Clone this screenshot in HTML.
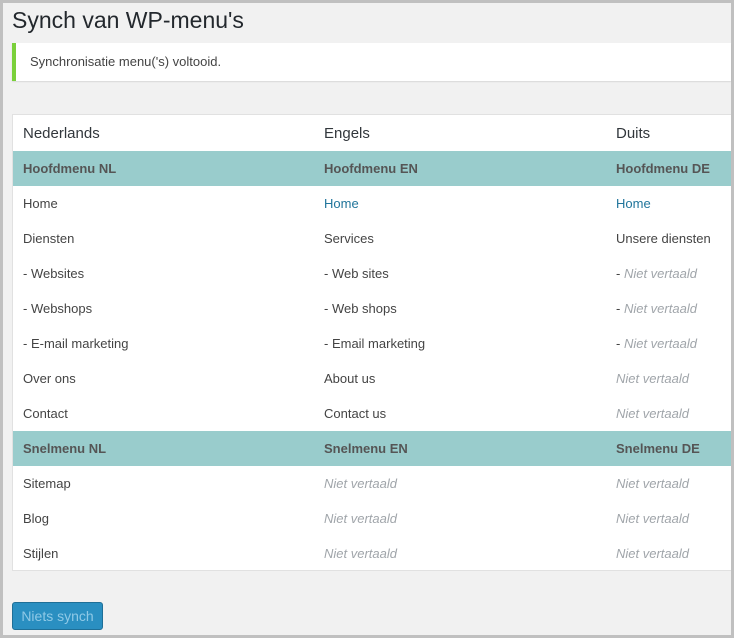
<!DOCTYPE html>
<html><head><style>
html,body{margin:0;padding:0}
body{width:734px;height:638px;background:#f1f1f1;font-family:"Liberation Sans",sans-serif;position:relative;overflow:hidden}
.frame{position:absolute;inset:0;border:3px solid #c0c0c0;box-sizing:border-box}
h1{position:absolute;left:12px;top:7px;margin:0;font-weight:400;font-size:23px;color:#23282d}
.notice{position:absolute;left:12px;top:43px;width:719px;height:38px;background:#fff;border-left:4px solid #7ad03a;box-sizing:border-box;box-shadow:0 1px 1px rgba(0,0,0,.1);font-size:13px;color:#444;line-height:38px;padding-left:14px}
.tbl{position:absolute;left:12px;top:114px;width:719px;height:457px;background:#fff;border:1px solid #e1e1e1;border-right:none;box-sizing:border-box}
.row{position:absolute;left:0;width:718px;height:35px;font-size:13px;line-height:35px;color:#444}
.row span{position:absolute;top:0}
.c1{left:10px}.c2{left:311px}.c3{left:603px}
.hd{font-size:15px;color:#32373c;border-bottom:1px solid #e1e1e1;height:36px;line-height:37px}
.g{background:#99cccc;font-weight:bold;color:#555}
.a{color:#21759b}
.n{color:#a0a5aa;font-style:italic}
.btn{position:absolute;left:12px;top:602px;width:91px;height:28px;box-sizing:border-box;background:#2a8fc1;border:1px solid #1f6f97;border-radius:3px;color:#8fc9e6;font-size:14px;line-height:26px;text-align:center}
</style></head><body>
<div class="frame"></div>
<h1>Synch van WP-menu's</h1>
<div class="notice">Synchronisatie menu('s) voltooid.</div>
<div class="tbl">
<div class="row hd" style="top:0"><span class="c1">Nederlands</span><span class="c2">Engels</span><span class="c3">Duits</span></div>
<div class="row g" style="top:36px"><span class="c1">Hoofdmenu NL</span><span class="c2">Hoofdmenu EN</span><span class="c3">Hoofdmenu DE</span></div>
<div class="row" style="top:71px"><span class="c1">Home</span><span class="c2 a">Home</span><span class="c3 a">Home</span></div>
<div class="row" style="top:106px"><span class="c1">Diensten</span><span class="c2">Services</span><span class="c3">Unsere diensten</span></div>
<div class="row" style="top:141px"><span class="c1">- Websites</span><span class="c2">- Web sites</span><span class="c3">- <i class="n">Niet vertaald</i></span></div>
<div class="row" style="top:176px"><span class="c1">- Webshops</span><span class="c2">- Web shops</span><span class="c3">- <i class="n">Niet vertaald</i></span></div>
<div class="row" style="top:211px"><span class="c1">- E-mail marketing</span><span class="c2">- Email marketing</span><span class="c3">- <i class="n">Niet vertaald</i></span></div>
<div class="row" style="top:246px"><span class="c1">Over ons</span><span class="c2">About us</span><span class="c3 n">Niet vertaald</span></div>
<div class="row" style="top:281px"><span class="c1">Contact</span><span class="c2">Contact us</span><span class="c3 n">Niet vertaald</span></div>
<div class="row g" style="top:316px"><span class="c1">Snelmenu NL</span><span class="c2">Snelmenu EN</span><span class="c3">Snelmenu DE</span></div>
<div class="row" style="top:351px"><span class="c1">Sitemap</span><span class="c2 n">Niet vertaald</span><span class="c3 n">Niet vertaald</span></div>
<div class="row" style="top:386px"><span class="c1">Blog</span><span class="c2 n">Niet vertaald</span><span class="c3 n">Niet vertaald</span></div>
<div class="row" style="top:421px"><span class="c1">Stijlen</span><span class="c2 n">Niet vertaald</span><span class="c3 n">Niet vertaald</span></div>
</div>
<div class="btn">Niets synch</div>
</body></html>
